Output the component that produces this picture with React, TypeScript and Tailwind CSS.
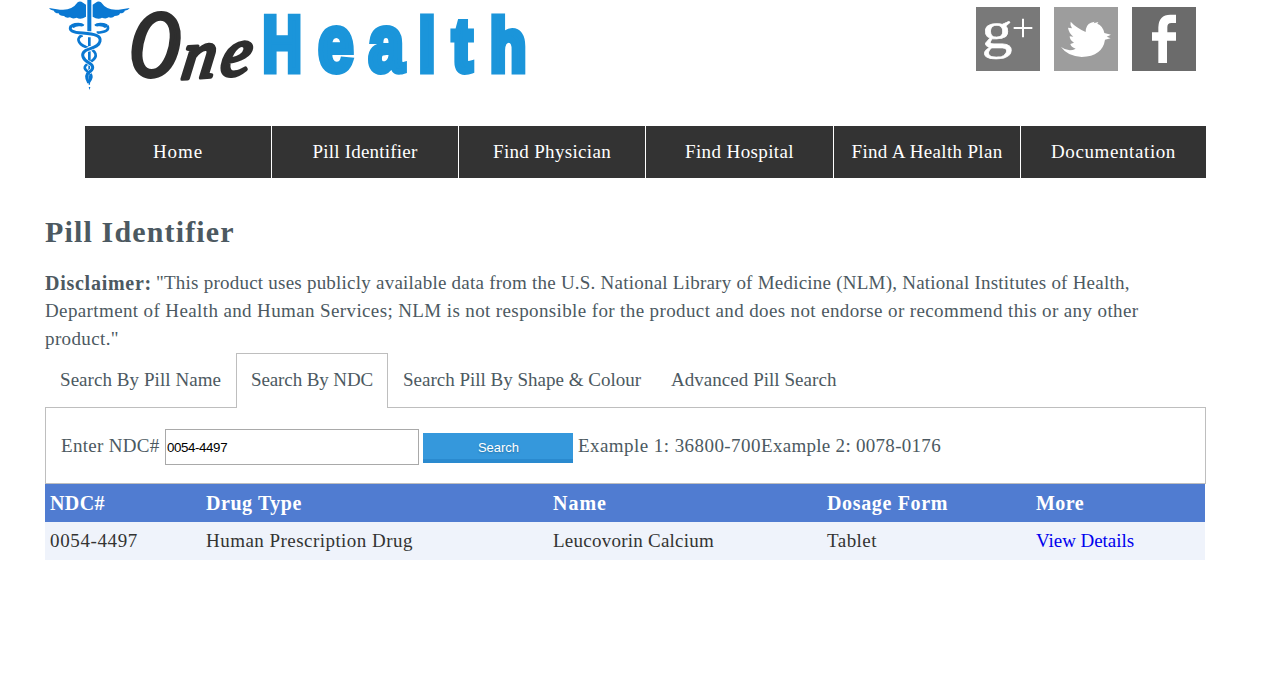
function Logo() {
  return (
    <svg className="block h-[95px] w-[490px] overflow-visible" viewBox="45 0 490 95" aria-label="OneHealth">
      <g transform="scale(.33333) translate(120 0)" fill="#0a78d2">
        <path d="M27 24L60 29Q95 33 113 7Q120 1 129 8L138 14V50Q122 60 110 53Q98 58 90 52Q78 55 72 48Q58 48 56 40Q42 39 42 32Q30 30 27 24Z" />
        <path d="M269 24L236 29Q201 33 183 7Q176 1 167 8L158 14V50Q174 60 186 53Q198 58 206 52Q218 55 224 48Q238 48 240 40Q254 39 254 32Q266 30 269 24Z" />
        <path d="M142 0h12v94h-12zM144 112h8v26h-8zM144 154h8v30h-8zM145 196h6v22h-6zM145 226h6l-1 28h-4zM146 261h5l-2 9z" />
        <path d="M104 69Q126 66 133 74Q132 81 120 79Q108 78 101 84Q90 80 94 73ZM192 69Q170 66 163 74Q164 81 176 79Q188 78 195 84Q206 80 202 73Z" />
        <g fill="none" strokeLinecap="butt">
          <path stroke="#0a78d2" strokeWidth="8" d="M202 77C210 92 194 97 170 98M128 106C108 111 112 132 138 141C170 151 176 170 154 184C130 197 129 206 145 216C160 226 154 238 145 249" />
          <path stroke="#fff" strokeWidth="13" d="M112 97C150 104 184 100 180 124C177 142 150 144 136 152C121 162 129 178 146 188C164 198 160 208 147 217" />
          <path stroke="#0a78d2" strokeWidth="9" d="M94 77C84 92 98 97 128 99C164 102 184 106 180 124C177 142 150 144 136 152C121 162 129 178 146 188C164 198 160 208 147 217C134 226 140 238 146 248" />
        </g>
      </g>
      <g fill="#2e2e2e" stroke="#2e2e2e" strokeLinejoin="round" className='font-["Liberation_Serif",serif] italic'>
        <text transform="translate(129 75) skewX(-3) scale(.74 1)" fontSize="92" strokeWidth="6">O</text>
        <text transform="translate(180 79) rotate(-4) skewX(-12)" fontSize="68" strokeWidth="4" x="0 39">ne</text>
      </g>
      <g fill="#1b95da" stroke="#1b95da" strokeWidth="6" className='font-["Liberation_Sans",sans-serif] font-bold'>
        <text transform="translate(262 71) scale(.7 1)" fontSize="77" x="1" strokeWidth="7">H</text>
        <text transform="translate(262 71) scale(.8 1)" fontSize="74" strokeWidth="7" x="70 133 196 238 285"><tspan fontSize="80" strokeWidth="6">ea</tspan>lth</text>
      </g>
    </svg>
  );
}

function Social() {
  return (
    <div className="mt-[7px] mr-[10px] flex gap-[14px]">
      <svg className="size-16 overflow-visible bg-[#797979]" viewBox="33 21 192 192">
        <text transform="translate(50 144) scale(1 .87)" fontSize="184" fill="#fff" stroke="#fff" strokeWidth="2" className='font-["Liberation_Serif",serif]'>g</text>
        <path d="M146 84h56M174 56v56" stroke="#fff" strokeWidth="6" />
      </svg>
      <svg className="size-16 bg-[#9d9d9d]" viewBox="267 21 192 192" fill="#fff">
        <path d="M288 141Q312 158 332 146Q318 142 316 132L327 128Q314 120 314 109L325 110Q311 98 309 83L321 85Q314 76 317 65Q332 82 362 96Q362 74 378 68L389 65L386 70L400 66L397 71Q413 76 418 99L438 104L425 110L437 115L420 119Q413 168 350 171Q308 169 288 141Z" />
      </svg>
      <svg className="size-16 bg-[#6b6b6b]" viewBox="501 21 192 192" fill="#fff">
        <path d="M580 189V122H561V97H580V82Q581 44 616 44H633V69H619Q607 69 607 81V97H633V122H606V189Z" />
      </svg>
    </div>
  );
}

const nav = [
  ["Home", "tracking-[0.89px]"],
  ["Pill Identifier", "tracking-[0.21px]"],
  ["Find Physician", "tracking-[0.32px]"],
  ["Find Hospital", "tracking-[0.39px]"],
  ["Find A Health Plan", "tracking-[0.32px]"],
  ["Documentation", "tracking-[0.6px]"],
];

const tabs = [
  ["Search By Pill Name", "w-[191px] tracking-[0.06px]"],
  ["Search By NDC", "w-[152px] tracking-[-0.11px]"],
  ["Search Pill By Shape & Colour", "w-[268px]"],
  ["Advanced Pill Search", "w-[195px] tracking-[0.04px]"],
];

const columns = [
  ["NDC#", "tracking-[0.42px]", "0054-4497", "tracking-[0.63px]"],
  ["Drug Type", "tracking-[0.56px]", "Human Prescription Drug", "tracking-[0.46px]"],
  ["Name", "tracking-[1px]", "Leucovorin Calcium", "tracking-[0.24px]"],
  ["Dosage Form", "tracking-[0.65px]", "Tablet", "tracking-[0.47px]"],
  ["More", "tracking-[0.43px]", "View Details", "tracking-[-0.05px] text-[#0000ee]"],
];

const grid = "grid h-[38px] w-[1160px] grid-cols-[156px_347px_274px_209px_174px] items-center whitespace-nowrap";

export default function App() {
  return (
    <main className='h-[675px] overflow-hidden bg-white pl-[45px] font-["Liberation_Serif",serif] text-[19px] leading-7 text-[#4c5961]'>
      <div className="w-[1161px]">
        <header className="flex h-[126px] justify-between"><Logo /><Social /></header>
        <nav className="ml-10 grid h-[52px] grid-cols-[186px_186px_186px_187px_186px_185px] gap-px whitespace-nowrap text-white">
          {nav.map(([label, tracking]) => (
            <a key={label} className={`flex items-center justify-center bg-[#333] ${tracking}`}>{label}</a>
          ))}
        </nav>
        <h1 className="mt-9 h-[55px] text-[30px] leading-9 font-bold tracking-[1.15px]">Pill Identifier</h1>
        <div className="h-[84px] whitespace-nowrap">
          <div className="flex"><b className="w-[111px] text-[20px] tracking-[0.74px]">Disclaimer:</b><span className="tracking-[0.23px]">"This product uses publicly available data from the U.S. National Library of Medicine (NLM), National Institutes of Health,</span></div>
          <div className="tracking-[0.38px]">Department of Health and Human Services; NLM is not responsible for the product and does not endorse or recommend this or any other</div>
          <div className="tracking-[0.38px]">product."</div>
        </div>
        <div className="flex h-[55px] whitespace-nowrap">
          {tabs.map(([label, cls], i) => (
            <a key={label} className={`flex items-center ${cls} ${i === 1 ? "z-10 border border-b-0 border-[#bebebe] bg-white pb-[3px] pl-[14px]" : "pb-px pl-[15px]"}`}>{label}</a>
          ))}
        </div>
        <div className="-mt-px flex h-[77px] items-center border border-[#bebebe] pl-[15px] whitespace-nowrap">
          <label className="w-[104px] tracking-[0.3px]">Enter NDC#</label>
          <input defaultValue="0054-4497" className='mt-[2px] h-9 w-[254px] border border-[#a9a9a9] pt-px pl-px font-["Liberation_Sans",sans-serif] text-[13.33px] tracking-[-0.4px] text-black' />
          <button className='mt-1 ml-1 h-[30px] w-[150px] border-b-4 border-[#2a8acf] bg-[#3598dc] pt-[3px] pl-px font-["Liberation_Sans",sans-serif] text-[13px] leading-6 text-white [text-shadow:0_1px_2px_rgb(0_0_0/0.25)]'>Search</button>
          <span className="ml-[5px] w-[183px] tracking-[0.44px]">Example 1: 36800-700</span>
          <span className="tracking-[0.29px]">Example 2: 0078-0176</span>
        </div>
        <div className={`${grid} bg-[#507cd1] text-[20px] font-bold text-white`}>
          {columns.map(([head, tracking]) => <span key={head} className={`pl-[5px] ${tracking}`}>{head}</span>)}
        </div>
        <div className={`${grid} bg-[#eff3fb] text-[#333]`}>
          {columns.map(([head, , value, cls]) => <span key={head} className={`pl-[5px] ${cls}`}>{value}</span>)}
        </div>
      </div>
    </main>
  );
}
